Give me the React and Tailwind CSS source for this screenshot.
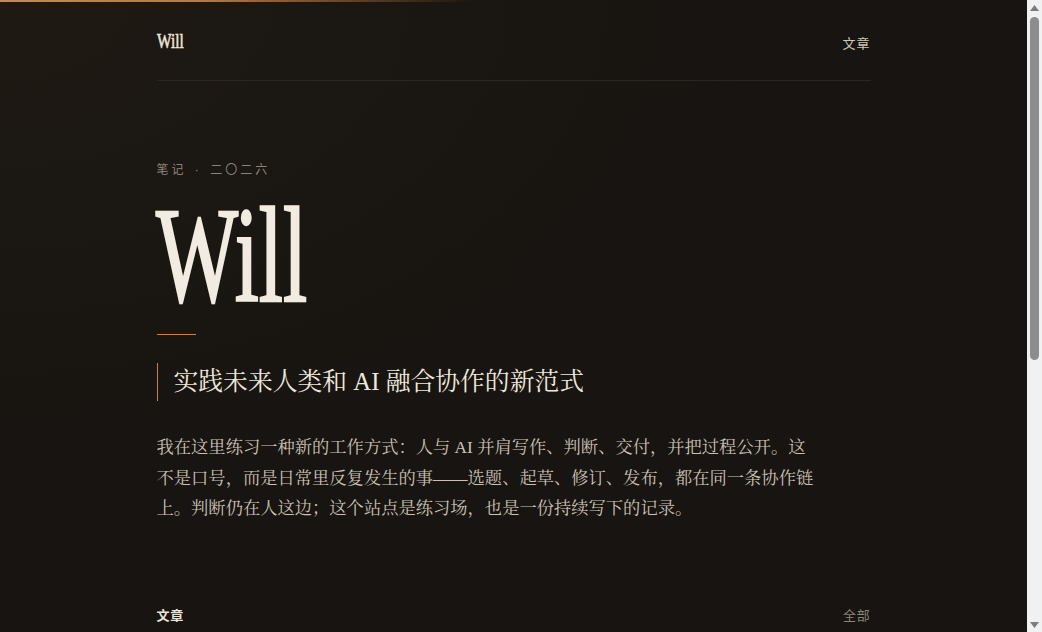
import React from 'react'

const serif = { fontFamily: '"Liberation Serif", "Noto Serif CJK SC", "Source Han Serif SC", "AR PL UMing CN", serif' }
const sans = { fontFamily: '"Liberation Sans", "Noto Sans CJK SC", sans-serif' }

function Scrollbar() {
    return (
        <div className="w-[15px] h-screen flex flex-col items-center bg-[#f1f1f1]">
            <div className="h-[15px] flex items-center justify-center">
                <svg width="9" height="6" viewBox="0 0 9 6"><path d="M4.5 0 9 6H0z" fill="#7c7c7c" /></svg>
            </div>
            <div className="flex-1 w-full px-[3px] pt-[2px]">
                <div className="h-[343px] rounded-full bg-[#8d8d8d]"></div>
            </div>
            <div className="h-[15px] flex items-center justify-center">
                <svg width="9" height="6" viewBox="0 0 9 6"><path d="M0 0h9L4.5 6z" fill="#7c7c7c" /></svg>
            </div>
        </div>
    )
}

export default function App() {
    return (
        <div className="flex h-screen overflow-hidden">
            <main className="flex-1 h-screen overflow-hidden bg-[#171411] bg-[radial-gradient(ellipse_at_top_left,#1e1913_0%,transparent_55%)] text-[#efe8dc]">
                <div className="h-[2px] bg-[linear-gradient(90deg,#c98a4b_0%,#b8783f_20%,transparent_46%)]"></div>

                <div className="w-[714px] mx-auto">
                    <header className="flex items-baseline justify-between pt-[28px] pb-[26px] border-b border-[#2b2622]">
                        <a className="block text-[22px] leading-none text-[#efe8dc] scale-x-[0.7] origin-left [-webkit-text-stroke:0.6px_#efe8dc]" style={serif}>Will</a>
                        <nav>
                            <a className="text-[13px] tracking-[0.08em] text-[#cfc6ba]" style={sans}>文章</a>
                        </nav>
                    </header>

                    <section className="pt-[80px]">
                        <div className="text-[12px] leading-[18px] tracking-[0.25em] text-[#8c8379]" style={sans}>
                            笔记 <span className="mx-[2px]">·</span> 二〇二六
                        </div>
                        <h1 className="mt-[8px] h-[141px] text-[136px] leading-none text-[#f2ebe1] scale-x-[0.64] origin-left -ml-[1px] [-webkit-text-stroke:2.5px_#f2ebe1]" style={serif}>Will</h1>
                        <div className="mt-[6px] w-[39px] h-px bg-[#c8843f]"></div>
                        <h2 className="mt-[28px] border-l border-[#c8843f] pl-[16px] text-[24.8px] leading-[38px] text-[#efe8dc]" style={serif}>
                            实践未来人类和 AI 融合协作的新范式
                        </h2>
                        <p className="mt-[32px] max-w-[665px] text-[17.3px] leading-[30.6px] text-[#cbc2b5]" style={serif}>
                            我在这里练习一种新的工作方式：人与 AI 并肩写作、判断、交付，并把过程公开。这不是口号，而是日常里反复发生的事——选题、起草、修订、发布，都在同一条协作链上。判断仍在人这边；这个站点是练习场，也是一份持续写下的记录。
                        </p>
                    </section>

                    <section className="mt-[81px] pb-[480px]">
                        <div className="flex items-baseline justify-between">
                            <h3 className="text-[13px] font-bold tracking-[0.06em] text-[#ece4d8]" style={sans}>文章</h3>
                            <a className="text-[13px] tracking-[0.06em] text-[#8c8379]" style={sans}>全部</a>
                        </div>
                    </section>
                </div>
            </main>
            <Scrollbar />
        </div>
    )
}
